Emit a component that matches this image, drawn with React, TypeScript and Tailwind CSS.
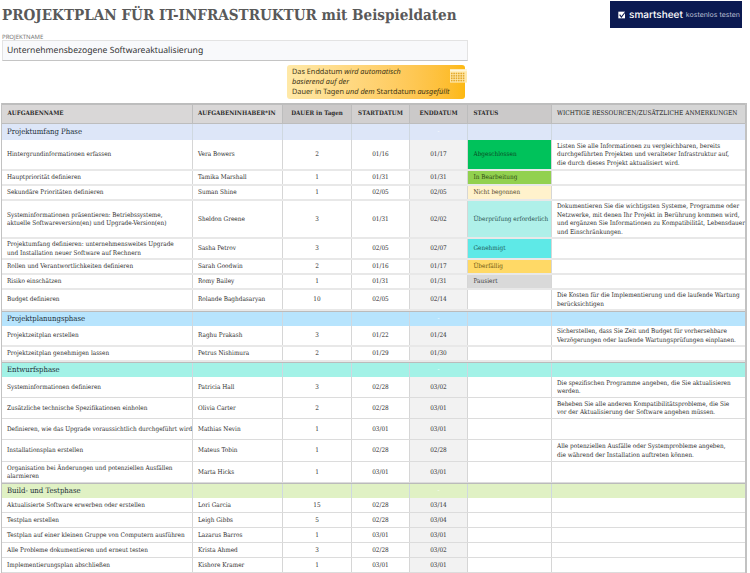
const serif = "font-['DejaVu_Serif_Condensed','DejaVu_Serif',serif] [font-stretch:condensed] [text-rendering:geometricPrecision]";
const cols = "grid grid-cols-[190.5px_90.5px_69px_58px_58px_83.5px_194.5px]";

type Row = { n: string; o: string; d: string; s: string; e: string; st?: string; note?: string; h: string };
type Sec = { title: string; bg: string; h: string; top: boolean; line: string };

const stBg: Record<string, string> = {
  "Abgeschlossen": "bg-[#00c25b] text-[#0b4a25]",
  "In Bearbeitung": "bg-[#92d14f] text-[#2c4a12]",
  "Nicht begonnen": "bg-[#fff2cc] text-[#4f4528]",
  "Überprüfung erforderlich": "bg-[#aff0e9] text-[#264f4b]",
  "Genehmigt": "bg-[#5ee9e7] text-[#1c5856]",
  "Überfällig": "bg-[#ffd966] text-[#6b5410]",
  "Pausiert": "bg-[#d9d9d9] text-[#3a3a3a]",
};

const groups: { sec: Sec; rows: Row[] }[] = [
  {
    sec: { title: "Projektumfang Phase", bg: "bg-[#dde6f8]", h: "h-[16px]", top: false, line: "border-b-2 border-[#e8e8e8]" },
    rows: [
      { n: "Hintergrundinformationen erfassen", o: "Vera Bowers", d: "2", s: "01/16", e: "01/17", st: "Abgeschlossen", note: "Listen Sie alle Informationen zu vergleichbaren, bereits\ndurchgeführten Projekten und veralteter Infrastruktur auf,\ndie durch dieses Projekt aktualisiert wird.", h: "h-[31px]" },
      { n: "Hauptpriorität definieren", o: "Tamika Marshall", d: "1", s: "01/31", e: "01/31", st: "In Bearbeitung", h: "h-[15px]" },
      { n: "Sekundäre Prioritäten definieren", o: "Suman Shine", d: "1", s: "02/05", e: "02/05", st: "Nicht begonnen", h: "h-[15px]" },
      { n: "Systeminformationen präsentieren: Betriebssysteme,\naktuelle Softwareversion(en) und Upgrade-Version(en)", o: "Sheldon Greene", d: "3", s: "01/31", e: "02/02", st: "Überprüfung erforderlich", note: "Dokumentieren Sie die wichtigsten Systeme, Programme oder\nNetzwerke, mit denen Ihr Projekt in Berührung kommen wird,\nund ergänzen Sie Informationen zu Kompatibilität, Lebensdauer\nund Einschränkungen.", h: "h-[38px]" },
      { n: "Projektumfang definieren: unternehmensweites Upgrade\nund Installation neuer Software auf Rechnern", o: "Sasha Petrov", d: "3", s: "02/05", e: "02/07", st: "Genehmigt", h: "h-[21px]" },
      { n: "Rollen und Verantwortlichkeiten definieren", o: "Sarah Goodwin", d: "2", s: "01/16", e: "01/17", st: "Überfällig", h: "h-[15px]" },
      { n: "Risiko einschätzen", o: "Romy Bailey", d: "1", s: "01/31", e: "01/31", st: "Pausiert", h: "h-[15px]" },
      { n: "Budget definieren", o: "Rolande Baghdasaryan", d: "10", s: "02/05", e: "02/14", note: "Die Kosten für die Implementierung und die laufende Wartung\nberücksichtigen", h: "h-[21px]" },
    ],
  },
  {
    sec: { title: "Projektplanungsphase", bg: "bg-[#b7e4fd]", h: "h-[15px]", top: true, line: "border-b-2 border-[#e8e8e8]" },
    rows: [
      { n: "Projektzeitplan erstellen", o: "Raghu Prakash", d: "3", s: "01/22", e: "01/24", note: "Sicherstellen, dass Sie Zeit und Budget für vorhersehbare\nVerzögerungen oder laufende Wartungsprüfungen einplanen.", h: "h-[21px]" },
      { n: "Projektzeitplan genehmigen lassen", o: "Petrus Nishimura", d: "2", s: "01/29", e: "01/30", h: "h-[15px]" },
    ],
  },
  {
    sec: { title: "Entwurfsphase", bg: "bg-[#a3f2e7]", h: "h-[15px]", top: true, line: "border-b border-[#dcdcdc]" },
    rows: [
      { n: "Systeminformationen definieren", o: "Patricia Hall", d: "3", s: "02/28", e: "03/02", note: "Die spezifischen Programme angeben, die Sie aktualisieren\nwerden.", h: "h-[21px]" },
      { n: "Zusätzliche technische Spezifikationen einholen", o: "Olivia Carter", d: "2", s: "02/28", e: "03/01", note: "Beheben Sie alle anderen Kompatibilitätsprobleme, die Sie\nvor der Aktualisierung der Software angehen müssen.", h: "h-[21px]" },
      { n: "Definieren, wie das Upgrade voraussichtlich durchgeführt wird", o: "Mathias Nevin", d: "1", s: "03/01", e: "03/01", h: "h-[21px]" },
      { n: "Installationsplan erstellen", o: "Mateus Tobin", d: "1", s: "02/28", e: "02/28", note: "Alle potenziellen Ausfälle oder Systemprobleme angeben,\ndie während der Installation auftreten können.", h: "h-[22px]" },
      { n: "Organisation bei Änderungen und potenziellen Ausfällen\nalarmieren", o: "Marta Hicks", d: "1", s: "03/01", e: "03/01", h: "h-[21px]" },
    ],
  },
  {
    sec: { title: "Build- und Testphase", bg: "bg-[#e0f1c4]", h: "h-[15px]", top: true, line: "border-b border-[#dcdcdc]" },
    rows: [
      { n: "Aktualisierte Software erwerben oder erstellen", o: "Lori Garcia", d: "15", s: "02/28", e: "03/14", h: "h-[15px]" },
      { n: "Testplan erstellen", o: "Leigh Gibbs", d: "5", s: "02/28", e: "03/04", h: "h-[15px]" },
      { n: "Testplan auf einer kleinen Gruppe von Computern ausführen", o: "Lazarus Barros", d: "1", s: "03/01", e: "03/01", h: "h-[15px]" },
      { n: "Alle Probleme dokumentieren und erneut testen", o: "Krista Ahmed", d: "3", s: "02/28", e: "03/02", h: "h-[15px]" },
      { n: "Implementierungsplan abschließen", o: "Kishore Kramer", d: "1", s: "03/01", e: "03/01", h: "h-[15px]" },
    ],
  },
];

const cell = "flex items-center border-r border-[#d6d6d6] min-w-0 whitespace-pre leading-[8.5px]";

function Head({ t, bg, center, last }: { t: string; bg: string; center?: boolean; last?: boolean }) {
  return (
    <div className={`flex items-center ${center ? "justify-center" : "pl-[5.5px]"} border-r border-[#bdbdbd] ${bg} whitespace-nowrap overflow-hidden ${last ? "font-normal text-[6.5px] text-[#222222]" : "font-bold"}`}>
      {t}
    </div>
  );
}

export default function App() {
  return (
    <div className={`w-[750px] h-[573px] overflow-hidden bg-white ${serif}`}>
      <div className="flex justify-between h-[34px]">
        <h1 className="pl-[2px] pt-[5px] text-[15.1px] leading-[20px] font-bold text-[#595959] whitespace-nowrap">
          PROJEKTPLAN FÜR IT-INFRASTRUKTUR mit Beispieldaten
        </h1>
        <div className="mt-[1px] mr-[8px] w-[132px] h-[27px] bg-[#0b1a51] flex items-center pl-[8px] gap-[3px] text-white font-['Inter',sans-serif] [font-stretch:normal]">
          <svg viewBox="0 0 12 12" className="w-[8px] h-[8px] shrink-0">
            <rect x="0.5" y="1" width="10" height="10" fill="#fff" />
            <path d="M2.5 5.5 L5 9 L11 1.5" fill="none" stroke="#0b1a51" strokeWidth="1.6" />
          </svg>
          <span className="text-[10px] leading-none font-medium whitespace-nowrap">smartsheet</span>
          <span className="text-[7px] leading-none text-[#b9bfd2] whitespace-nowrap">kostenlos testen</span>
        </div>
      </div>
      <div className="pl-[2px] h-[6px] flex items-center text-[6px] text-[#777777] font-['Noto_Sans',sans-serif] [font-stretch:normal]">PROJEKTNAME</div>
      <div className="ml-[2px] w-[466px] h-[21px] bg-[#f8f9fb] border border-[#e3e3e3] border-b-[#c4c4c4] flex items-center pl-[4px] text-[8.6px] text-[#333333] font-['Noto_Sans',sans-serif] [font-stretch:normal]">
        Unternehmensbezogene Softwareaktualisierung
      </div>
      <div className="ml-[287px] mt-[4px] w-[178px] h-[34px] rounded-[3px] bg-gradient-to-r from-[#ffe9a8] to-[#fdb90f] flex items-center justify-between pl-[5px] pr-[4px] text-[7.3px] leading-[10px] text-[#3d3414] font-['Noto_Sans',sans-serif] [font-stretch:normal]">
        <div className="whitespace-nowrap">
          Das Enddatum <i>wird automatisch</i>
          <br />
          <i>basierend auf der</i>
          <br />
          Dauer in Tagen <i>und dem</i> Startdatum <i>ausgefüllt</i>
        </div>
        <svg viewBox="0 0 18 14" className="w-[17px] h-[14px] shrink-0 self-start mt-[4px]">
          <rect x="0" y="0" width="18" height="14" fill="#ffe9ac" />
          <rect x="0" y="0" width="18" height="2" fill="#fff6d8" />
          {[3.5, 6, 8.5, 11].map((y) =>
            [1, 3.5, 6, 8.5, 11, 13.5].map((x) => (
              <rect key={`${x}-${y}`} x={x} y={y} width="1.7" height="1.7" fill="#e3a92b" />
            ))
          )}
        </svg>
      </div>

      <div className="ml-[1px] mt-[4px] w-[745.5px] border-l border-r-2 border-[#c2c2c2] text-[6.4px] text-[#2b2b2b]">
        <div className={`${cols} h-[21px] border-t-2 border-b border-[#bdbdbd] text-[6.2px] text-[#2b2b2b]`}>
          <Head t="AUFGABENNAME" bg="bg-[#d9d7d7]" />
          <Head t="AUFGABENINHABER*IN" bg="bg-[#d9d7d7]" />
          <Head t="DAUER in Tagen" bg="bg-[#cbc9c9]" center />
          <Head t="STARTDATUM" bg="bg-[#d2d0d0]" center />
          <Head t="ENDDATUM" bg="bg-[#cbc9c9]" center />
          <Head t="STATUS" bg="bg-[#cbc9c9]" />
          <Head t="WICHTIGE RESSOURCEN/ZUSÄTZLICHE ANMERKUNGEN" bg="bg-[#d6d6d6]" last />
        </div>
        {groups.map((g) => (
          <div key={g.sec.title}>
            <div className={`${cols} ${g.sec.h} ${g.sec.bg} ${g.sec.top ? "border-t border-[#bbbbbb]" : ""}`}>
              <div className="flex items-center pl-[5px] text-[7.7px] text-[#22303a] whitespace-nowrap border-r border-[#cfd8e0]">{g.sec.title}</div>
              <div className="border-r border-[#cfd8e0]" />
              <div className="border-r border-[#cfd8e0]" />
              <div className="border-r border-[#cfd8e0]" />
              <div className="border-r border-[#cfd8e0] flex items-center justify-center text-white">-</div>
              <div className="border-r border-[#cfd8e0]" />
              <div />
            </div>
            {g.rows.map((r) => (
              <div key={r.n} className={`${cols} ${r.h} ${g.sec.line}`}>
                <div className={`${cell} pl-[5px]`}>{r.n}</div>
                <div className={`${cell} pl-[5.5px]`}>{r.o}</div>
                <div className={`${cell} justify-center`}>{r.d}</div>
                <div className={`${cell} justify-center`}>{r.s}</div>
                <div className={`${cell} justify-center bg-[#f2f2f2]`}>{r.e}</div>
                <div className={`${cell} pl-[5.5px] ${r.st ? stBg[r.st] : ""}`}>{r.st}</div>
                <div className="flex items-center pl-[5.5px] whitespace-pre leading-[8.5px] overflow-hidden">{r.note}</div>
              </div>
            ))}
          </div>
        ))}
      </div>
    </div>
  );
}
